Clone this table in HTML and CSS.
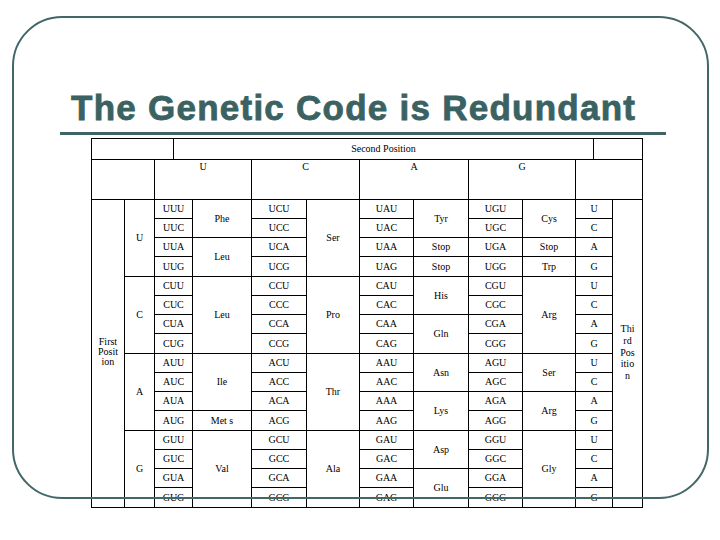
FILE: index.html
```html
<!DOCTYPE html>
<html>
<head>
<meta charset="utf-8">
<link rel="stylesheet" href="styles.css">
</head>
<body>
<div class="slide">
  <div class="title-wrap"><h1 class="title">The Genetic Code is Redundant</h1></div>
  <div class="code">
    <div class="cell h-a"></div>
    <div class="cell h-b">Second Position</div>
    <div class="cell h-c"></div>

    <div class="cell h2-a"></div>
    <div class="cell h2-u top">U</div>
    <div class="cell h2-c top">C</div>
    <div class="cell h2-g1 top">A</div>
    <div class="cell h2-g2 top">G</div>
    <div class="cell h2-e"></div>

    <div class="cell k1 r16 first">First<br>Posit<br>ion</div>
    <div class="cell k2 r4">U</div>
    <div class="cell cd1">UUU</div>
    <div class="cell aa1 r2">Phe</div>
    <div class="cell cd2">UCU</div>
    <div class="cell aa2 r4">Ser</div>
    <div class="cell cd3">UAU</div>
    <div class="cell aa3 r2">Tyr</div>
    <div class="cell cd4">UGU</div>
    <div class="cell aa4 r2">Cys</div>
    <div class="cell k3">U</div>
    <div class="cell k4 r16 third">Thi<br>rd<br>Pos<br>itio<br>n</div>

    <div class="cell cd1">UUC</div>
    <div class="cell cd2">UCC</div>
    <div class="cell cd3">UAC</div>
    <div class="cell cd4">UGC</div>
    <div class="cell k3">C</div>

    <div class="cell cd1">UUA</div>
    <div class="cell aa1 r2">Leu</div>
    <div class="cell cd2">UCA</div>
    <div class="cell cd3">UAA</div>
    <div class="cell aa3">Stop</div>
    <div class="cell cd4">UGA</div>
    <div class="cell aa4">Stop</div>
    <div class="cell k3">A</div>

    <div class="cell cd1">UUG</div>
    <div class="cell cd2">UCG</div>
    <div class="cell cd3">UAG</div>
    <div class="cell aa3">Stop</div>
    <div class="cell cd4">UGG</div>
    <div class="cell aa4">Trp</div>
    <div class="cell k3">G</div>

    <div class="cell k2 r4">C</div>
    <div class="cell cd1">CUU</div>
    <div class="cell aa1 r4">Leu</div>
    <div class="cell cd2">CCU</div>
    <div class="cell aa2 r4">Pro</div>
    <div class="cell cd3">CAU</div>
    <div class="cell aa3 r2">His</div>
    <div class="cell cd4">CGU</div>
    <div class="cell aa4 r4">Arg</div>
    <div class="cell k3">U</div>

    <div class="cell cd1">CUC</div>
    <div class="cell cd2">CCC</div>
    <div class="cell cd3">CAC</div>
    <div class="cell cd4">CGC</div>
    <div class="cell k3">C</div>

    <div class="cell cd1">CUA</div>
    <div class="cell cd2">CCA</div>
    <div class="cell cd3">CAA</div>
    <div class="cell aa3 r2">Gln</div>
    <div class="cell cd4">CGA</div>
    <div class="cell k3">A</div>

    <div class="cell cd1">CUG</div>
    <div class="cell cd2">CCG</div>
    <div class="cell cd3">CAG</div>
    <div class="cell cd4">CGG</div>
    <div class="cell k3">G</div>

    <div class="cell k2 r4">A</div>
    <div class="cell cd1">AUU</div>
    <div class="cell aa1 r3">Ile</div>
    <div class="cell cd2">ACU</div>
    <div class="cell aa2 r4">Thr</div>
    <div class="cell cd3">AAU</div>
    <div class="cell aa3 r2">Asn</div>
    <div class="cell cd4">AGU</div>
    <div class="cell aa4 r2">Ser</div>
    <div class="cell k3">U</div>

    <div class="cell cd1">AUC</div>
    <div class="cell cd2">ACC</div>
    <div class="cell cd3">AAC</div>
    <div class="cell cd4">AGC</div>
    <div class="cell k3">C</div>

    <div class="cell cd1">AUA</div>
    <div class="cell cd2">ACA</div>
    <div class="cell cd3">AAA</div>
    <div class="cell aa3 r2">Lys</div>
    <div class="cell cd4">AGA</div>
    <div class="cell aa4 r2">Arg</div>
    <div class="cell k3">A</div>

    <div class="cell cd1">AUG</div>
    <div class="cell aa1">Met s</div>
    <div class="cell cd2">ACG</div>
    <div class="cell cd3">AAG</div>
    <div class="cell cd4">AGG</div>
    <div class="cell k3">G</div>

    <div class="cell k2 r4">G</div>
    <div class="cell cd1">GUU</div>
    <div class="cell aa1 r4">Val</div>
    <div class="cell cd2">GCU</div>
    <div class="cell aa2 r4">Ala</div>
    <div class="cell cd3">GAU</div>
    <div class="cell aa3 r2">Asp</div>
    <div class="cell cd4">GGU</div>
    <div class="cell aa4 r4">Gly</div>
    <div class="cell k3">U</div>

    <div class="cell cd1">GUC</div>
    <div class="cell cd2">GCC</div>
    <div class="cell cd3">GAC</div>
    <div class="cell cd4">GGC</div>
    <div class="cell k3">C</div>

    <div class="cell cd1">GUA</div>
    <div class="cell cd2">GCA</div>
    <div class="cell cd3">GAA</div>
    <div class="cell aa3 r2">Glu</div>
    <div class="cell cd4">GGA</div>
    <div class="cell k3">A</div>

    <div class="cell cd1">GUG</div>
    <div class="cell cd2">GCG</div>
    <div class="cell cd3">GAG</div>
    <div class="cell cd4">GGG</div>
    <div class="cell k3">G</div>
  </div>
  <div class="frame"></div>
</div>
</body>
</html>
```
FILE: styles.css
```css
html, body {
  margin: 0;
  padding: 0;
  background: #ffffff;
}

.slide {
  position: relative;
  width: 720px;
  height: 540px;
  overflow: hidden;
  background: #ffffff;
}

.title-wrap {
  margin-left: 60px;
  width: 595px;
  padding: 88px 0 4px 11px;
  border-bottom: 3px solid #3f6464;
}

.title {
  margin: 0;
  font-family: "Liberation Sans", Arial, sans-serif;
  font-weight: bold;
  font-size: 35px;
  line-height: 40px;
  letter-spacing: 1.25px;
  color: #3b6262;
  -webkit-text-stroke: 0.8px #3b6262;
  white-space: nowrap;
}

.code {
  display: inline-grid;
  margin: 3px 0 0 91px;
  padding: 1px;
  gap: 1px;
  background: #000000;
  grid-template-columns: 32px 29px 18px 18px 58px 54px 52px 53px 54px 53px 52px 17px 18px 29px;
  grid-template-rows: 20px 39px repeat(4, 18px 18px 18px 19px);
  font-family: "Liberation Serif", "Times New Roman", serif;
  font-size: 10px;
  color: #000000;
}

.cell {
  background: #ffffff;
  display: flex;
  align-items: center;
  justify-content: center;
  text-align: center;
  line-height: 12px;
  white-space: nowrap;
}

.cell.top {
  align-items: flex-start;
  padding-top: 1px;
}

.h-a { grid-column: 1 / 4; }
.h-b { grid-column: 4 / 13; }
.h-c { grid-column: 13 / 15; }

.h2-a { grid-column: 1 / 3; }
.h2-u { grid-column: 3 / 6; }
.h2-c { grid-column: 6 / 8; }
.h2-g1 { grid-column: 8 / 10; }
.h2-g2 { grid-column: 10 / 12; }
.h2-e { grid-column: 12 / 15; }

.k1 { grid-column: 1 / 2; }
.k2 { grid-column: 2 / 3; }
.cd1 { grid-column: 3 / 5; }
.aa1 { grid-column: 5 / 6; }
.cd2 { grid-column: 6 / 7; }
.aa2 { grid-column: 7 / 8; }
.cd3 { grid-column: 8 / 9; }
.aa3 { grid-column: 9 / 10; }
.cd4 { grid-column: 10 / 11; }
.aa4 { grid-column: 11 / 12; }
.k3 { grid-column: 12 / 14; }
.k4 { grid-column: 14 / 15; }

.r2 { grid-row: span 2; }
.r3 { grid-row: span 3; }
.r4 { grid-row: span 4; }
.r16 { grid-row: span 16; }

.first {
  line-height: 10px;
  padding-bottom: 4px;
}

.third {
  line-height: 11.75px;
  padding-bottom: 2px;
}

.frame {
  position: absolute;
  left: 12px;
  top: 16px;
  width: 697px;
  height: 483px;
  box-sizing: border-box;
  border: 2px solid #436767;
  border-radius: 50px;
  pointer-events: none;
}
```
